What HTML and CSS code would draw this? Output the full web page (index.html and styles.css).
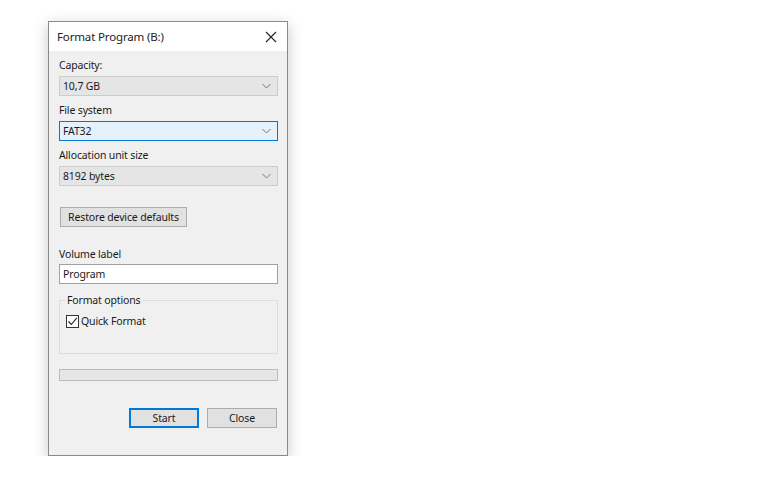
FILE: index.html
```html
<!DOCTYPE html>
<html lang="en">
<head>
  <meta charset="UTF-8" />
  <title>Format Program (B:)</title>
  <link rel="stylesheet" href="styles.css">
</head>
<body>
  <div class="dialog">
    <div class="titlebar">
      <span class="title">Format Program (B:)</span>
      <svg class="close-x" width="12" height="12" viewBox="0 0 12 12">
        <path d="M1 1 L11 11 M11 1 L1 11" stroke="#222" stroke-width="1.1" fill="none" />
      </svg>
    </div>

    <div class="content">
      <div class="label">Capacity:</div>
      <div class="combo">
        <span>10,7 GB</span>
        <svg class="chev" width="9" height="6" viewBox="0 0 9 6"><path d="M0.5 1 L4.5 5 L8.5 1" stroke="#777" fill="none" /></svg>
      </div>

      <div class="label">File system</div>
      <div class="combo focused">
        <span>FAT32</span>
        <svg class="chev" width="9" height="6" viewBox="0 0 9 6"><path d="M0.5 1 L4.5 5 L8.5 1" stroke="#777" fill="none" /></svg>
      </div>

      <div class="label">Allocation unit size</div>
      <div class="combo">
        <span>8192 bytes</span>
        <svg class="chev" width="9" height="6" viewBox="0 0 9 6"><path d="M0.5 1 L4.5 5 L8.5 1" stroke="#777" fill="none" /></svg>
      </div>

      <button class="btn restore">Restore device defaults</button>

      <div class="label vol">Volume label</div>
      <div class="textbox">Program</div>

      <fieldset class="group">
        <legend>Format options</legend>
        <div class="check-row">
          <span class="checkbox">
            <svg width="11" height="11" viewBox="0 0 11 11"><path d="M1.5 5.5 L4.3 8.5 L9.8 1.8" stroke="#222" stroke-width="1.1" fill="none" /></svg>
          </span>
          <span>Quick Format</span>
        </div>
      </fieldset>

      <div class="progress"></div>

      <div class="actions">
        <button class="btn default">Start</button>
        <button class="btn">Close</button>
      </div>
    </div>
  </div>
</body>
</html>
```

FILE: styles.css
```css
body {
  margin: 0;
  padding: 0;
  background-color: #fff;
  font-family: "Noto Sans", "Open Sans", sans-serif;
  font-size: 10.5px;
  letter-spacing: -0.15px;
  color: #1a1a1a;
}

.dialog {
  margin: 21px 0 0 48px;
  width: 240px;
  height: 435px;
  box-sizing: border-box;
  border: 1px solid #8a8a8a;
  background-color: #f0f0f0;
  box-shadow: 0 4px 14px rgba(0, 0, 0, 0.22);
  display: flex;
  flex-direction: column;
}

.titlebar {
  height: 29px;
  background-color: #fff;
  display: flex;
  align-items: center;
  justify-content: space-between;
  padding: 0 10px 0 8px;
  flex-shrink: 0;
}

.title {
  font-size: 11.5px;
  color: #222;
  margin-top: -1px;
}

.close-x {
  margin-top: 1px;
}

.content {
  padding: 7px 9px 0 10px;
  display: flex;
  flex-direction: column;
}

.label {
  height: 15px;
  line-height: 15px;
  margin-bottom: 3px;
}

.combo {
  height: 20px;
  box-sizing: border-box;
  border: 1px solid #cccccc;
  background-color: #e5e5e5;
  display: flex;
  align-items: center;
  justify-content: space-between;
  padding: 0 6px 0 3px;
  margin-bottom: 7px;
}

.combo.focused {
  border-color: #0078d7;
  background-color: #e5f1fb;
}

.btn {
  font-family: inherit;
  font-size: 10.5px;
  letter-spacing: -0.15px;
  color: #1a1a1a;
  height: 20px;
  box-sizing: border-box;
  border: 1px solid #adadad;
  background-color: #e1e1e1;
  padding: 0;
  cursor: pointer;
}

.btn.restore {
  align-self: flex-start;
  width: 127px;
  margin: 14px 0 0 1px;
}

.label.vol {
  margin-top: 20px;
  margin-bottom: 2px;
}

.textbox {
  height: 20px;
  box-sizing: border-box;
  border: 1px solid #a0a0a0;
  background-color: #fff;
  padding: 0 3px;
  line-height: 18px;
}

.group {
  margin: 9px 0 0 0;
  padding: 0 0 0 6px;
  height: 61px;
  box-sizing: border-box;
  border: 1px solid #dcdcdc;
  min-width: 0;
}

.group legend {
  padding: 0 1px;
  margin-left: 0;
  line-height: 15px;
}

.check-row {
  display: flex;
  align-items: center;
  gap: 2px;
  margin-top: 6px;
}

.checkbox {
  width: 13px;
  height: 13px;
  box-sizing: border-box;
  border: 1px solid #333;
  background-color: #fff;
  display: flex;
  align-items: center;
  justify-content: center;
}

.progress {
  margin-top: 15px;
  height: 12px;
  box-sizing: border-box;
  border: 1px solid #bcbcbc;
  background-color: #e6e6e6;
}

.actions {
  display: flex;
  justify-content: flex-end;
  gap: 8px;
  margin: 27px 1px 0 0;
}

.actions .btn {
  width: 70px;
}

.actions .btn.default {
  border: 2px solid #0078d7;
}
```
